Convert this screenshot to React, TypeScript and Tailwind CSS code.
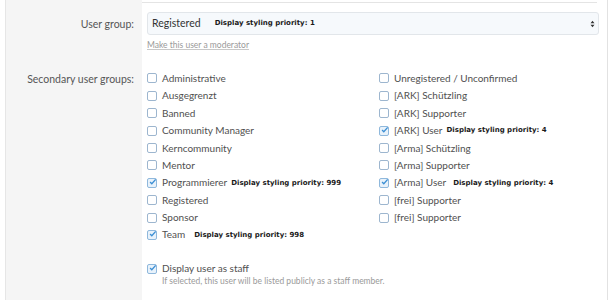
import React from "react";

type Group = { name: string; checked?: boolean; priority?: string; gap?: string };

const left: Group[] = [
  { name: "Administrative" },
  { name: "Ausgegrenzt" },
  { name: "Banned" },
  { name: "Community Manager" },
  { name: "Kerncommunity" },
  { name: "Mentor" },
  { name: "Programmierer", checked: true, priority: "999", gap: "ml-[4px]" },
  { name: "Registered" },
  { name: "Sponsor" },
  { name: "Team", checked: true, priority: "998", gap: "ml-[9px]" },
];

const right: Group[] = [
  { name: "Unregistered / Unconfirmed" },
  { name: "[ARK] Schützling" },
  { name: "[ARK] Supporter" },
  { name: "[ARK] User", checked: true, priority: "4", gap: "ml-[4px]" },
  { name: "[Arma] Schützling" },
  { name: "[Arma] Supporter" },
  { name: "[Arma] User", checked: true, priority: "4", gap: "ml-[7px]" },
  { name: "[frei] Supporter" },
  { name: "[frei] Supporter" },
];

function Box({ checked }: { checked?: boolean }) {
  return (
    <span
      className={
        "w-[10px] h-[10px] rounded-[2px] border flex items-center justify-center shrink-0 " +
        (checked ? "border-[#8fb8dc] bg-[#e8f2fb]" : "border-[#9db6cf] bg-white")
      }
    >
      {checked && (
        <svg viewBox="0 0 10 10" className="w-[10px] h-[10px] -mt-[2px] ml-[1px]">
          <path d="M1.5 5 L4 7.5 L9.5 1.5" fill="none" stroke="#3c8fd4" strokeWidth="1.8" />
        </svg>
      )}
    </span>
  );
}

function Row({ g }: { g: Group }) {
  return (
    <div className="h-[17.4px] flex items-center">
      <Box checked={g.checked} />
      <span className="ml-[5px] text-[#505050]">{g.name}</span>
      {g.priority && (
        <span className={"font-['DejaVu_Sans',sans-serif] font-bold text-[7px] text-[#1a1a1a] " + g.gap}>
          Display styling priority: {g.priority}
        </span>
      )}
    </div>
  );
}

export default function App() {
  return (
    <div className="w-[608px] h-[300px] flex bg-white font-['Lato',sans-serif] text-[10.5px] overflow-hidden">
      <div className="w-[5px]" />
      <div className="w-[137px] bg-[#f5f5f5] border-l border-[#e6e6e6] text-[#555] text-right pr-[8px]">
        <div className="mt-[16px] leading-[17px]">User group:</div>
        <div className="mt-[38px] leading-[17px]">Secondary user groups:</div>
      </div>
      <div className="flex-1 border-r border-[#e2e2e2] pl-[5px] pr-[8px]">
        <div className="h-[3px] border-b border-[#e4e4e4] mr-[2px] -ml-[5px]" />
        <div className="mt-[9px] h-[23px] border border-[#e2e6ea] bg-[#f6f9fc] rounded-[3px] flex items-center pl-[4px] pr-[3px]">
          <span className="text-[#333]">Registered</span>
          <span className="ml-[14px] font-['DejaVu_Sans',sans-serif] font-bold text-[7px] text-[#1a1a1a]">
            Display styling priority: 1
          </span>
          <svg viewBox="0 0 6 10" className="ml-auto w-[5px] h-[8px]">
            <path d="M0.5 4 L3 1 L5.5 4 Z M0.5 6 L3 9 L5.5 6 Z" fill="#333" />
          </svg>
        </div>
        <div className="mt-[4px] text-[8.5px] text-[#9a9a9a] underline decoration-[#c8c8c8]">Make this user a moderator</div>
        <div className="mt-[18px] flex text-[10px]">
          <div className="w-[232px]">
            {left.map((g, i) => (
              <Row key={i} g={g} />
            ))}
          </div>
          <div>
            {right.map((g, i) => (
              <Row key={i} g={g} />
            ))}
          </div>
        </div>
        <div className="mt-[17px] text-[10px]">
          <div className="h-[16px] flex items-center">
            <Box checked />
            <span className="ml-[5px] text-[#505050]">Display user as staff</span>
          </div>
          <div className="ml-[15px] -mt-[1px] text-[8.5px] text-[#9a9a9a] leading-[11px]">
            If selected, this user will be listed publicly as a staff member.
          </div>
        </div>
      </div>
    </div>
  );
}
